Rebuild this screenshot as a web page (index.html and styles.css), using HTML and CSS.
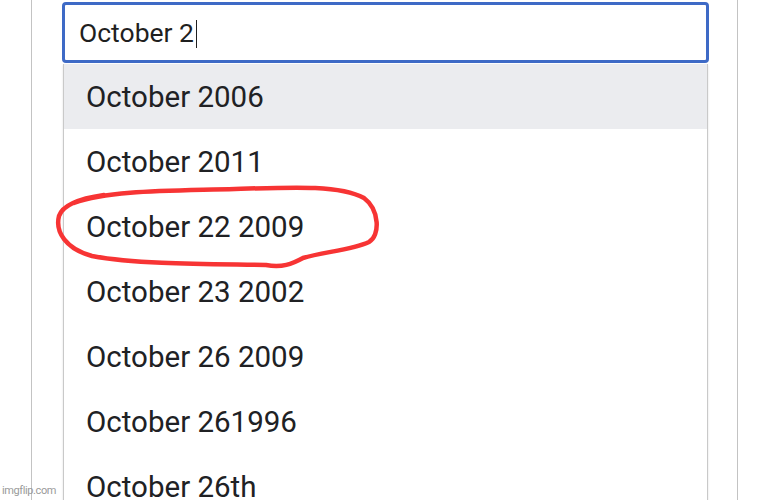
FILE: index.html
```html
<!DOCTYPE html>
<html>
<head>
<meta charset="utf-8">
<title>Date search</title>
<link rel="stylesheet" href="styles.css">
</head>
<body>

<div class="panel">
  <div class="combo">
    <div class="field">October 2<span class="caret"></span></div>

    <ul class="suggestions">
      <li class="active">October 2006</li>
      <li>October 2011</li>
      <li>October 22 2009</li>
      <li>October 23 2002</li>
      <li>October 26 2009</li>
      <li>October 261996</li>
      <li>October 26th</li>
    </ul>
  </div>
</div>

<svg class="scribble" width="769" height="500" viewBox="0 0 769 500">
  <path d="M 74 203 C 110 190, 170 191, 235 189 C 295 187, 340 185, 364 198 C 380 210, 380 236, 369 242 C 352 250, 322 252, 303 258 C 292 264, 282 268, 266 265 C 220 264, 140 265, 92 256 C 66 249, 55 232, 59 216 C 62 207, 76 199, 104 195"
        fill="none" stroke="#f73434" stroke-width="4.5" stroke-linecap="round" stroke-linejoin="round"/>
</svg>

<div class="watermark">imgflip.com</div>

</body>
</html>
```

FILE: styles.css
```css
body {
  margin: 0;
  background: #ffffff;
  font-family: Roboto, "Liberation Sans", Arial, sans-serif;
  color: #202124;
  overflow: hidden;
}

.panel {
  margin-left: 31px;
  width: 707px;
  height: 500px;
  padding-top: 2px;
  box-sizing: border-box;
  border-left: 1px solid #c3c3c3;
  border-right: 1px solid #c3c3c3;
}

.combo {
  margin-left: 30px;
  width: 647px;
}

.field {
  height: 61px;
  box-sizing: border-box;
  border: 3px solid #3e6ac6;
  border-radius: 4px;
  padding-left: 14px;
  font-size: 26.5px;
  line-height: 56px;
  color: #1f1f1f;
}

.caret {
  display: inline-block;
  width: 1px;
  height: 28px;
  margin-left: 2px;
  background: #1f1f1f;
  vertical-align: -6px;
}

.suggestions {
  list-style: none;
  margin: 1px 1px 0 1px;
  padding: 0;
  border-left: 1px solid #c9c9c9;
  border-right: 1px solid #c9c9c9;
  box-shadow: 0 1px 2px rgba(0, 0, 0, 0.12);
}

.suggestions li {
  height: 65px;
  line-height: 67px;
  padding-left: 22px;
  font-size: 29.5px;
  white-space: nowrap;
}

.suggestions li.active {
  background: #ebecef;
}

.scribble {
  position: absolute;
  left: 0;
  top: 0;
  pointer-events: none;
}

.watermark {
  position: absolute;
  left: 2px;
  top: 484px;
  font-size: 11px;
  letter-spacing: -0.4px;
  color: #9a9a9a;
}
```
